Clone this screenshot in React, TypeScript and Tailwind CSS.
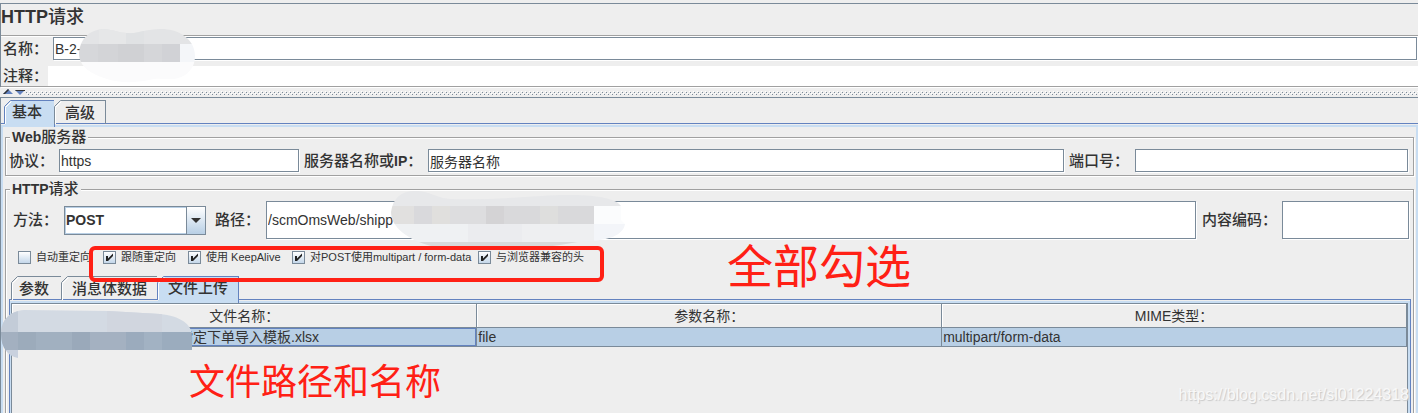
import React from "react";

type TabProps = {
  label: string;
  active?: boolean;
};

type FieldProps = {
  id: string;
  value?: string;
  className?: string;
};

type OptionProps = {
  label: string;
  checked?: boolean;
};

type Tile = [x: number, y: number, w: number, h: number, fill: string];

const options: OptionProps[] = [
  { label: "自动重定向" },
  { label: "跟随重定向", checked: true },
  { label: "使用 KeepAlive", checked: true },
  { label: "对POST使用multipart / form-data", checked: true },
  { label: "与浏览器兼容的头", checked: true },
];

const nameTiles: Tile[] = [
  [0, 0, 120, 15, "#e3e4e6"],
  [20, 0, 27, 15, "#e6e7e8"],
  [47, 0, 18, 15, "#e0e2e4"],
  [0, 15, 19, 18, "#d6d7da"],
  [19, 15, 20, 18, "#d3d4d7"],
  [39, 15, 26, 18, "#d0d1d4"],
  [65, 15, 18, 18, "#d5d6d9"],
  [83, 15, 18, 18, "#d1d2d6"],
  [101, 15, 20, 18, "#f4f6f9"],
  [0, 33, 120, 22, "#fbfbfc"],
];

const pathTiles: Tile[] = [
  [0, 0, 236, 16, "#e7e8ea"],
  [0, 16, 23, 18, "#e1e0df"],
  [23, 16, 18, 18, "#d9d9dc"],
  [41, 16, 18, 18, "#e0dfdd"],
  [59, 16, 36, 18, "#dddddf"],
  [95, 16, 18, 18, "#d4d3d5"],
  [113, 16, 36, 18, "#d9d9db"],
  [149, 16, 18, 18, "#dededd"],
  [167, 16, 36, 18, "#d9d9db"],
  [203, 16, 33, 18, "#fbfcfd"],
  [0, 34, 77, 18, "#eff1f3"],
  [77, 34, 54, 18, "#ebecef"],
  [131, 34, 72, 18, "#eeeff1"],
  [203, 34, 33, 18, "#f3f5f9"],
  [0, 52, 236, 8, "#d8d9da"],
];

const fileTiles: Tile[] = [
  [0, 0, 192, 22, "#d3dae3"],
  [0, 0, 18, 22, "#c3ccd8"],
  [107, 0, 55, 22, "#d1d6df"],
  [0, 22, 18, 18, "#a3b0c0"],
  [18, 22, 18, 18, "#9cabbb"],
  [36, 22, 36, 18, "#a1b0c0"],
  [72, 22, 18, 18, "#9aa9ba"],
  [90, 22, 36, 18, "#a4b1c1"],
  [126, 22, 18, 18, "#9babbd"],
  [144, 22, 18, 18, "#a2b2c3"],
  [162, 22, 30, 18, "#9bacbe"],
  [0, 40, 18, 10, "#c9d1de"],
];

const Tab: React.FC<TabProps> = ({ label, active }) => {
  return (
    <button
      type="button"
      role="tab"
      aria-selected={!!active}
      className={`relative border-t border-r px-[10px] text-[15px] leading-[22px] font-medium first:pr-3 first:pl-[7px] ${
        active
          ? "-mb-[3px] h-[27px] border-[#6382bf] bg-[#c8ddf2] pb-[4px]"
          : "h-6 border-[#7a8a99]"
      }`}
    >
      {/* Cut corner on the left side */}
      <svg
        className="absolute -top-px -left-px h-6 w-2"
        viewBox="0 0 8 24"
        fill="none"
      >
        <path d="M0 0H8L1 7V8H0Z" fill="#eeeeee" />
        <path
          d="M0.5 24V6.5L6.5 0.5H8"
          stroke={active ? "#6382bf" : "#7a8a99"}
        />
        <path d="M1.5 24V7.5L7.5 1.5" stroke="#ffffff" />
      </svg>
      {label}
    </button>
  );
};

const Field: React.FC<FieldProps> = ({ id, value, className }) => {
  return (
    <input
      id={id}
      type="text"
      defaultValue={value}
      className={`h-full min-w-0 rounded-none border border-[#7a8a99] bg-white px-px text-sm shadow-[1px_1px_0_#fff] outline-none ${className}`}
    />
  );
};

const Option: React.FC<OptionProps> = ({ label, checked }) => {
  return (
    <label className="flex items-center gap-[5px] text-[11px] leading-[13px] whitespace-nowrap">
      <span className="relative size-[13px]">
        <input
          type="checkbox"
          defaultChecked={checked}
          className="peer block size-[13px] appearance-none border border-[#7a8a99] bg-linear-to-b from-white to-[#c4d7ea]"
        />
        <svg
          className="pointer-events-none absolute inset-0 hidden size-[13px] peer-checked:block"
          viewBox="0 0 13 13"
        >
          <path d="M3 5H5V7.5L10 2.5V5L5 10H3Z" fill="#222222" />
        </svg>
      </span>
      {label}
    </label>
  );
};

const Mosaic: React.FC<{
  id: string;
  shape: string;
  tiles: Tile[];
  className: string;
}> = ({ id, shape, tiles, className }) => {
  return (
    <svg className={`pointer-events-none absolute ${className}`}>
      <clipPath id={id}>
        <path d={shape} />
      </clipPath>
      <g clipPath={`url(#${id})`} shapeRendering="crispEdges">
        {tiles.map(([x, y, w, h, fill], i) => (
          <rect key={i} x={x} y={y} width={w} height={h} fill={fill} />
        ))}
      </g>
    </svg>
  );
};

const App: React.FC = () => {
  return (
    <main className="relative flex h-screen flex-col overflow-hidden bg-[#eeeeee] pt-[3px] font-['Liberation_Sans','Noto_Sans_CJK_SC',sans-serif] text-[#333333]">
      {/* Name and comment */}
      <section className="border-t border-l border-[#7a8a99]">
        <h1 className="h-[31px] text-lg leading-[26px] font-bold">
          HTTP<span className="font-medium">请求</span>
        </h1>
        <div className="border-y border-[#a0a0a0] pt-px shadow-[0_1px_0_#fff,inset_0_1px_0_#fff]">
          <div className="flex h-[23px] items-center pr-px">
            <label
              htmlFor="name"
              className="w-[52px] pl-[2px] text-[15px] leading-5 font-medium"
            >
              名称：
            </label>
            <Field id="name" value="B-2-" className="grow" />
          </div>
          <div className="mt-[6px] flex h-5 items-center">
            <label
              htmlFor="comment"
              className="w-[47px] pl-[2px] text-[15px] leading-5 font-medium"
            >
              注释：
            </label>
            <input
              id="comment"
              type="text"
              className="h-full min-w-0 grow bg-white px-px text-sm outline-none"
            />
          </div>
        </div>
      </section>

      {/* Split pane divider */}
      <svg className="mt-px block h-[9px] w-full shrink-0">
        <defs>
          <pattern
            id="grip"
            x="3"
            y="3"
            width="4"
            height="4"
            patternUnits="userSpaceOnUse"
          >
            <rect x="2" y="0" width="1" height="1" fill="#ffffff" />
            <rect x="3" y="1" width="1" height="1" fill="#7a8a99" />
            <rect x="0" y="2" width="1" height="1" fill="#ffffff" />
            <rect x="1" y="3" width="1" height="1" fill="#7a8a99" />
          </pattern>
        </defs>
        <rect x="26" y="3" width="100%" height="4" fill="url(#grip)" />
        <path d="M3 6L8 1L13 6Z" fill="#6382bf" />
        <path d="M3 6L8 1L9 2L5 6Z" fill="#333333" />
        <path d="M15 2H25L20 7Z" fill="#6382bf" />
        <path d="M15 2H25V3H16Z" fill="#333333" />
      </svg>

      <section className="flex min-h-0 grow flex-col border-t border-l border-[#7a8a99] pt-[2px]">
        <div role="tablist" className="z-10 flex h-6 shrink-0 pl-1">
          <Tab label="基本" active />
          <Tab label="高级" />
        </div>
        <div className="-mt-px flex min-h-0 grow flex-col border-t border-[#6382bf]">
          <div className="mt-px flex min-h-0 grow flex-col border-x-2 border-t-2 border-[#c8ddf2] px-[2px] pt-[2px]">
            <fieldset className="min-w-0 border border-[#a0a0a0] pb-[3px] shadow-[1px_1px_0_#fff,inset_1px_1px_0_#fff]">
              <legend className="ml-[4px] flex h-4 items-center bg-[#eeeeee] px-[2px] text-[15px] leading-4 font-medium">
                <span className="text-sm leading-4 font-bold">Web</span>服务器
              </legend>
              <div className="mt-1 flex h-[23px] items-center pr-[5px] text-[15px] leading-5 font-medium">
                <label htmlFor="protocol" className="w-[53px] shrink-0 pl-[3px]">
                  协议：
                </label>
                <Field id="protocol" value="https" className="w-60 font-normal" />
                <label
                  htmlFor="server"
                  className="w-[129px] shrink-0 pl-[5px] whitespace-nowrap"
                >
                  服务器名称或<span className="text-sm font-bold">IP</span>：
                </label>
                <Field
                  id="server"
                  value="服务器名称"
                  className="grow font-normal"
                />
                <label htmlFor="port" className="w-[71px] shrink-0 pl-[5px]">
                  端口号：
                </label>
                <Field id="port" className="w-[273px] font-normal" />
              </div>
            </fieldset>

            <fieldset className="mt-[5px] flex min-h-0 min-w-0 grow flex-col border border-b-0 border-[#a0a0a0] shadow-[1px_1px_0_#fff,inset_1px_1px_0_#fff]">
              <legend className="ml-[4px] flex h-4 items-center bg-[#eeeeee] px-[2px] text-[15px] leading-4 font-medium">
                <span className="text-sm leading-4 font-bold">HTTP</span>请求
              </legend>
              <div className="mt-1 flex h-[38px] shrink-0 items-center pr-[4px] text-[15px] leading-5 font-medium">
                <label htmlFor="method" className="w-[58px] shrink-0 pl-[7px]">
                  方法：
                </label>
                <div className="relative h-[29px] w-[142px] shrink-0">
                  <select
                    id="method"
                    className="h-full w-full appearance-none rounded-none border border-[#7a8a99] bg-white pl-px text-sm font-bold shadow-[inset_0_0_0_1px_#b8cfe5] outline-none"
                  >
                    <option>POST</option>
                    <option>GET</option>
                  </select>
                  <span className="pointer-events-none absolute inset-y-0 right-0 flex w-5 items-center justify-center border border-[#7a8a99] bg-linear-to-b from-white to-[#b8cfe5]">
                    <svg className="h-[5px] w-[10px]" viewBox="0 0 10 5">
                      <path d="M0 0H10L5 5Z" fill="#333333" />
                    </svg>
                  </span>
                </div>
                <label htmlFor="path" className="w-[60px] shrink-0 pl-[9px]">
                  路径：
                </label>
                <Field
                  id="path"
                  value="/scmOmsWeb/shipp"
                  className="grow font-normal"
                />
                <label htmlFor="encoding" className="w-[86px] shrink-0 pl-[6px]">
                  内容编码：
                </label>
                <Field id="encoding" className="w-[127px] font-normal" />
              </div>

              <div className="mt-3 grid shrink-0 grid-cols-[85px_85px_104px_186px_auto] pl-3">
                {options.map((option) => (
                  <Option key={option.label} {...option} />
                ))}
              </div>

              <div
                role="tablist"
                className="z-10 mt-3 flex h-6 shrink-0 pl-[6px]"
              >
                <Tab label="参数" />
                <Tab label="消息体数据" />
                <Tab label="文件上传" active />
              </div>
              <div className="-mt-px mr-[2px] ml-[3px] flex min-h-0 grow flex-col border-x border-t border-[#6382bf] pt-px">
                <div className="min-h-0 grow border-t-2 border-r-2 border-l border-[#c8ddf2]">
                  <div className="h-full border-x border-t border-[#7a8a99]">
                    <table className="w-full table-fixed border-collapse text-sm leading-[18px]">
                      <thead>
                        <tr className="h-[23px]">
                          {["文件名称：", "参数名称：", "MIME类型："].map(
                            (title) => (
                              <th
                                key={title}
                                className="border-r border-b border-[#7a8a99] p-0 pt-[2px] font-normal shadow-[inset_1px_1px_0_#fff]"
                              >
                                {title}
                              </th>
                            ),
                          )}
                        </tr>
                      </thead>
                      <tbody>
                        <tr className="h-[19px] bg-[#b8cfe5]">
                          <td className="border-r border-b border-[#7a8a99] p-0 pl-[167px] shadow-[inset_0_0_0_1px_#6382bf]">
                            指定下单导入模板.xlsx
                          </td>
                          <td className="border-r border-b border-[#7a8a99] p-0 pl-px">
                            file
                          </td>
                          <td className="border-r border-b border-[#7a8a99] p-0 pl-px">
                            multipart/form-data
                          </td>
                        </tr>
                      </tbody>
                    </table>
                  </div>
                </div>
              </div>
            </fieldset>
          </div>
        </div>
      </section>

      {/* Blurred out values */}
      <Mosaic
        id="name-mask"
        className="top-[29px] left-[79px] z-20 h-[55px] w-[120px]"
        shape="M0 24C1 10 10 1 24 0C33 0 40 4 48 4C60 5 66 0 82 0C100 0 116 10 116 27C116 42 104 50 92 50C84 50 76 49 70 51C55 54 40 54 28 50C12 45 0 38 0 24Z"
        tiles={nameTiles}
      />
      <Mosaic
        id="path-mask"
        className="top-[190px] left-[391px] z-20 h-[60px] w-[236px]"
        shape="M0 22C2 8 10 1 24 1C40 1 44 8 60 9C90 10 120 8 150 6C180 4 222 4 230 16V30L234 34C232 46 216 50 200 51C184 51 170 56 150 57C110 56 70 59 40 56C18 50 0 38 0 22Z"
        tiles={pathTiles}
      />
      <Mosaic
        id="file-mask"
        className="top-[310px] left-0 z-20 h-[50px] w-[194px]"
        shape="M1 24C1 10 10 1 24 0L108 1L160 4C180 6 192 14 192 26V40H18V48C8 46 1 38 1 24Z"
        tiles={fileTiles}
      />

      {/* Notes */}
      <div className="pointer-events-none absolute top-[246px] left-[89px] z-30 h-9 w-[515px] rounded-md border-4 border-[#ff2015]" />
      <p className="absolute top-[239px] left-[727px] z-30 text-[46px] leading-[56px] text-[#ff2015]">
        全部勾选
      </p>
      <p className="absolute top-[362px] left-[189px] z-30 text-[36px] leading-[42px] text-[#ff2015]">
        文件路径和名称
      </p>
      <p className="absolute right-[9px] bottom-[8px] z-30 text-base leading-5 text-[#f8f8f8] [text-shadow:1px_1px_1px_#c8c8c8]">
        https://blog.csdn.net/sl01224318
      </p>
    </main>
  );
};

export default App;
